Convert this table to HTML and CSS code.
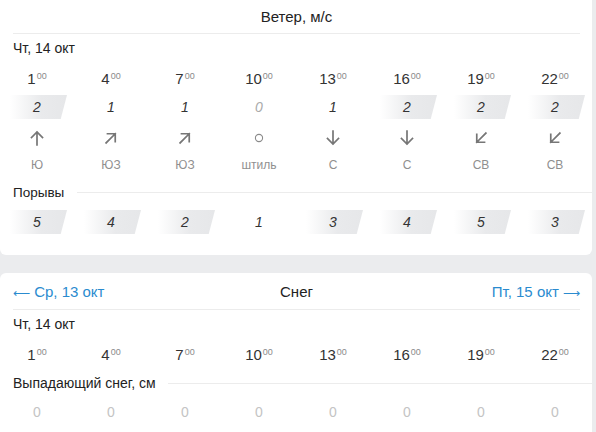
FILE: index.html
```html
<!DOCTYPE html>
<html lang="ru">
<head>
<meta charset="utf-8">
<link rel="stylesheet" href="styles.css">
</head>
<body>
<div class="page">
  <section class="card">
    <div class="title">Ветер, м/с</div>
    <div class="date">Чт, 14 окт</div>
    <div class="grid times">
      <div>1<span class="min">00</span></div>
      <div>4<span class="min">00</span></div>
      <div>7<span class="min">00</span></div>
      <div>10<span class="min">00</span></div>
      <div>13<span class="min">00</span></div>
      <div>16<span class="min">00</span></div>
      <div>19<span class="min">00</span></div>
      <div>22<span class="min">00</span></div>
    </div>
    <div class="grid vals">
      <div class="v hi">2</div>
      <div class="v">1</div>
      <div class="v">1</div>
      <div class="v zero">0</div>
      <div class="v">1</div>
      <div class="v hi">2</div>
      <div class="v hi">2</div>
      <div class="v hi">2</div>
    </div>
    <div class="grid arrows">
      <div><svg class="arr" viewBox="0 0 16 16"><path d="M8 15V2M2.5 7.5L8 2l5.5 5.5"/></svg></div>
      <div><svg class="arr r45" viewBox="0 0 16 16"><path d="M8 15V2M2.5 7.5L8 2l5.5 5.5"/></svg></div>
      <div><svg class="arr r45" viewBox="0 0 16 16"><path d="M8 15V2M2.5 7.5L8 2l5.5 5.5"/></svg></div>
      <div><svg class="arr" viewBox="0 0 16 16"><circle cx="8" cy="8" r="3.6" class="calm"/></svg></div>
      <div><svg class="arr r180" viewBox="0 0 16 16"><path d="M8 15V2M2.5 7.5L8 2l5.5 5.5"/></svg></div>
      <div><svg class="arr r180" viewBox="0 0 16 16"><path d="M8 15V2M2.5 7.5L8 2l5.5 5.5"/></svg></div>
      <div><svg class="arr r225" viewBox="0 0 16 16"><path d="M8 15V2M2.5 7.5L8 2l5.5 5.5"/></svg></div>
      <div><svg class="arr r225" viewBox="0 0 16 16"><path d="M8 15V2M2.5 7.5L8 2l5.5 5.5"/></svg></div>
    </div>
    <div class="grid dirs">
      <div>Ю</div><div>ЮЗ</div><div>ЮЗ</div><div>штиль</div>
      <div>С</div><div>С</div><div>СВ</div><div>СВ</div>
    </div>
    <div class="label">Порывы</div>
    <div class="grid vals">
      <div class="v hi">5</div>
      <div class="v hi">4</div>
      <div class="v hi">2</div>
      <div class="v">1</div>
      <div class="v hi">3</div>
      <div class="v hi">4</div>
      <div class="v hi">5</div>
      <div class="v hi">3</div>
    </div>
  </section>

  <section class="card second">
    <div class="nav">
      <a class="link"><span class="long">⟵</span> Ср, 13 окт</a>
      <span class="nav-title">Снег</span>
      <a class="link right">Пт, 15 окт <span class="long">⟶</span></a>
    </div>
    <div class="date">Чт, 14 окт</div>
    <div class="grid times">
      <div>1<span class="min">00</span></div>
      <div>4<span class="min">00</span></div>
      <div>7<span class="min">00</span></div>
      <div>10<span class="min">00</span></div>
      <div>13<span class="min">00</span></div>
      <div>16<span class="min">00</span></div>
      <div>19<span class="min">00</span></div>
      <div>22<span class="min">00</span></div>
    </div>
    <div class="label snow">Выпадающий снег, см</div>
    <div class="grid zeros">
      <div>0</div><div>0</div><div>0</div><div>0</div>
      <div>0</div><div>0</div><div>0</div><div>0</div>
    </div>
  </section>
</div>
</body>
</html>
```

FILE: styles.css
```css
html, body {
  margin: 0;
  padding: 0;
  background: #ebecee;
  font-family: "Liberation Sans", Arial, sans-serif;
  color: #222;
}

.page {
  width: 592px;
  display: flex;
  flex-direction: column;
  gap: 18px;
}

.card {
  background: #fff;
  border-radius: 0 0 6px 6px;
  padding-bottom: 21px;
}

.card.second {
  border-radius: 6px 6px 0 0;
  padding-bottom: 40px;
}

.title {
  margin: 0 12px 0 13px;
  height: 33px;
  line-height: 33px;
  text-align: center;
  font-size: 15px;
  border-bottom: 1px solid #ececec;
}

.date {
  height: 28px;
  line-height: 29px;
  padding-left: 13px;
  font-size: 14px;
  color: #222;
}

.grid {
  display: grid;
  grid-template-columns: repeat(8, 1fr);
}

.times > div {
  height: 28px;
  line-height: 28px;
  text-align: center;
  font-size: 15px;
  color: #333;
}

.min {
  font-size: 9px;
  color: #8a8a8a;
  vertical-align: 5px;
  margin-left: 1px;
}

.vals {
  margin-top: 5px;
}

.v {
  height: 24px;
  line-height: 24px;
  margin: 0 7px 0 10px;
  padding-right: 3px;
  text-align: center;
  font-size: 14px;
  font-style: italic;
  color: #333;
}

.v.hi {
  background: linear-gradient(to right, #ffffff 0%, #e9eaec 55%, #e6e7e9 100%);
  clip-path: polygon(0 0, 100% 0, 89% 100%, 0 100%);
}

.v.zero {
  color: #aaa;
}

.arrows {
  margin-top: 6px;
  height: 26px;
}

.arrows > div {
  display: flex;
  align-items: center;
  justify-content: center;
}

.arr {
  width: 16px;
  height: 16px;
  fill: none;
  stroke: #767676;
  stroke-width: 1.7;
  stroke-linecap: square;
}

.arr .calm {
  stroke: #8a8a8a;
  stroke-width: 1.1;
}

.r45 { transform: rotate(45deg); }
.r180 { transform: rotate(180deg); }
.r225 { transform: rotate(225deg); }

.dirs {
  margin-top: 2px;
}

.dirs > div {
  height: 24px;
  line-height: 24px;
  text-align: center;
  font-size: 12px;
  color: #8f8f8f;
}

.label {
  display: flex;
  align-items: center;
  gap: 13px;
  margin-top: 2px;
  height: 26px;
  padding-left: 13px;
  font-size: 13.5px;
  color: #222;
}

.label::after {
  content: "";
  flex: 1;
  height: 1px;
  background: #ececec;
}

.label.snow {
  margin-top: 4px;
  gap: 12px;
  font-size: 14px;
}

.nav {
  display: flex;
  align-items: center;
  justify-content: space-between;
  margin: 0 12px 0 13px;
  height: 36px;
  border-bottom: 1px solid #ececec;
  font-size: 15px;
}

.link {
  color: #2a8bcf;
  width: 140px;
}

.long {
  font-size: 12px;
}

.link.right {
  text-align: right;
}

.nav-title {
  color: #222;
}

.zeros {
  margin-top: 4px;
}

.zeros > div {
  height: 24px;
  line-height: 24px;
  text-align: center;
  font-size: 14px;
  color: #c4c4c4;
}
```
